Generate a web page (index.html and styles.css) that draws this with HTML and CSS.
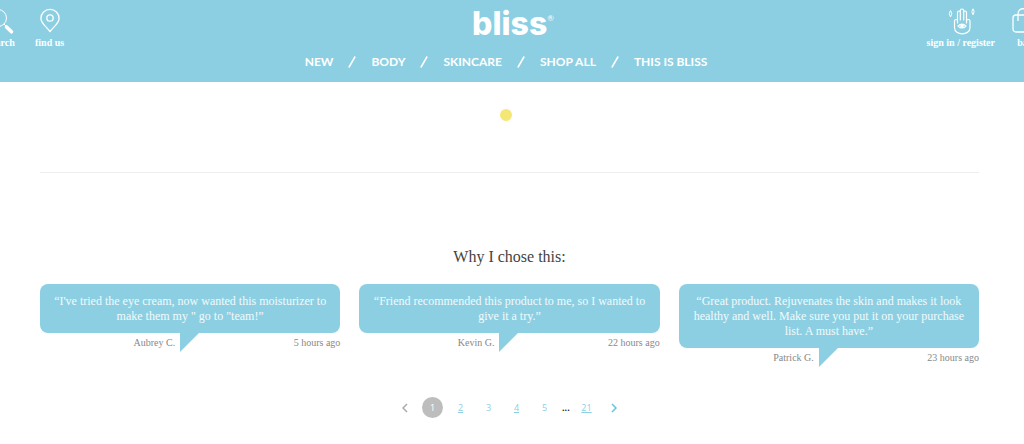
FILE: index.html
```html
<!DOCTYPE html>
<html lang="en">
<head>
<meta charset="utf-8">
<title>bliss</title>
<meta name="viewport" content="width=device-width, initial-scale=1">
<link rel="stylesheet" href="styles.css">
</head>
<body>
<header class="header">
  <div class="tools tools-left">
    <a class="tool" href="#search">
      <svg class="icon" viewBox="0 0 28 28" fill="none" stroke="currentColor"><circle cx="11" cy="11" r="8.500"/><path d="M17 17l2 2"/><path d="M19.500 20l5 4.800" stroke-width="3.600" stroke-linecap="round"/></svg>
      <span>search</span>
    </a>
    <a class="tool" href="#find">
      <svg class="icon" viewBox="0 0 28 28" fill="none" stroke="currentColor" stroke-width="1.300"><path d="M14 24.500C10.500 20 4.900 16 4.900 11.400a9.100 9.100 0 0 1 18.200 0C23.100 16 17.500 20 14 24.500z"/><circle cx="14" cy="11" r="3.200"/></svg>
      <span>find us</span>
    </a>
  </div>
  <div class="brand">
    <a class="logo" href="#home">bliss<sup class="mark">®</sup></a>
    <nav class="nav">
      <a href="#new">NEW</a><svg class="slash" viewBox="0 0 8 12"><path d="M.8 11.500L7.200 .5"/></svg>
      <a href="#body">BODY</a><svg class="slash" viewBox="0 0 8 12"><path d="M.8 11.500L7.200 .5"/></svg>
      <a href="#skincare">SKINCARE</a><svg class="slash" viewBox="0 0 8 12"><path d="M.8 11.500L7.200 .5"/></svg>
      <a href="#shop">SHOP ALL</a><svg class="slash" viewBox="0 0 8 12"><path d="M.8 11.500L7.200 .5"/></svg>
      <a href="#about">THIS IS BLISS</a>
    </nav>
  </div>
  <div class="tools tools-right">
    <a class="tool" href="#account">
      <svg class="icon" viewBox="0 0 28 28" fill="none" stroke="currentColor" stroke-width="1.200" stroke-linejoin="round"><path d="M7.500 14c0-2 3-2 3 0v2V5.500c0-2 2.800-2 2.800 0V13 3.500c0-2 3.400-2 3.400 0V13 5.500c0-2 2.800-2 2.800 0V16v-2c0-2 3.500-2 3.500 0v6.500c0 8.600-15.500 8.600-15.500 0z"/><path d="M11 19q4-4 8 0q-4 4-8 0z"/><circle cx="15" cy="19" r="1.200" fill="currentColor"/><path d="M3.500 3.500l1.300 3.200-1.300 3.200-1.300-3.200zM26 1.800l1.200 3-1.200 3-1.200-3z" stroke-width="1"/></svg>
      <span>sign in / register</span>
    </a>
    <a class="tool" href="#bag">
      <svg class="icon" viewBox="0 0 28 28" fill="none" stroke="currentColor" stroke-width="1.300"><rect x="2" y="8" width="20" height="17" rx="3"/><path d="M7 14V7c0-7 10-7 10 0v7"/></svg>
      <span>bag</span>
    </a>
  </div>
</header>
<main class="page">
  <div class="loader"><span class="dot"></span></div>
  <hr class="rule">
  <h2 class="title">Why I chose this:</h2>
  <section class="reviews">
    <article class="review">
      <p class="quote">“I've tried the eye cream, now wanted this moisturizer to make them my " go to "team!”</p>
      <footer class="meta"><span class="name">Aubrey C.</span><svg class="tail" viewBox="0 0 19 19"><path d="M0 0h19L0 19z"/></svg><time class="time">5 hours ago</time></footer>
    </article>
    <article class="review">
      <p class="quote">“Friend recommended this product to me, so I wanted to give it a try.”</p>
      <footer class="meta"><span class="name">Kevin G.</span><svg class="tail" viewBox="0 0 19 19"><path d="M0 0h19L0 19z"/></svg><time class="time">22 hours ago</time></footer>
    </article>
    <article class="review">
      <p class="quote">“Great product. Rejuvenates the skin and makes it look healthy and well. Make sure you put it on your purchase list. A must have.”</p>
      <footer class="meta"><span class="name">Patrick G.</span><svg class="tail" viewBox="0 0 19 19"><path d="M0 0h19L0 19z"/></svg><time class="time">23 hours ago</time></footer>
    </article>
  </section>
  <nav class="pager" aria-label="Pages">
    <button class="arrow" type="button" aria-label="Previous" disabled><svg viewBox="0 0 6 10"><path d="M5 1L1 5l4 4"/></svg></button>
    <a class="num current" href="#1" aria-current="page">1</a>
    <a class="num line" href="#2">2</a>
    <a class="num" href="#3">3</a>
    <a class="num line" href="#4">4</a>
    <a class="num" href="#5">5</a>
    <span class="dots">...</span>
    <a class="num line" href="#21">21</a>
    <button class="arrow next" type="button" aria-label="Next"><svg viewBox="0 0 6 10"><path d="M1 1l4 4-4 4"/></svg></button>
  </nav>
</main>
</body>
</html>
```
FILE: styles.css
```css
* { box-sizing: border-box; }
body {
  margin: 0;
  overflow-x: hidden;
  background: #fff;
  color: #444;
  font-family: "Liberation Serif", serif;
}
a { color: inherit; text-decoration: none; }

.header {
  display: flex;
  justify-content: space-between;
  overflow: hidden;
  padding-bottom: 12px;
  background: #8dcfe2;
  color: #fff;
}
.tools {
  display: flex;
  flex: 1 0 0;
  gap: 20px;
  padding-top: 7px;
}
.tools-left { margin-left: -13px; }
.tools-right { justify-content: flex-end; gap: 16px; margin-right: -15px; }
.tool {
  display: flex;
  flex-direction: column;
  align-items: center;
  gap: 1px;
  font: bold 10px/14px "Liberation Serif", serif;
  white-space: nowrap;
}
.icon { width: 28px; height: 28px; }
.brand { display: flex; flex-direction: column; align-items: center; }
.logo {
  padding-top: 4px;
  font: 800 32px/40px Inter, sans-serif;
}
.mark { font: 8px/8px Lato, sans-serif; vertical-align: 14px; }
.nav {
  display: flex;
  align-items: center;
  gap: 15px;
  padding: 9px 14px 0 0;
  font: 700 12px/17px Lato, sans-serif;
  white-space: nowrap;
}
.slash { width: 8px; height: 12px; fill: none; stroke: currentColor; stroke-width: 1.5; }

.page { padding: 27px 45px 24px 40px; }
.loader { display: flex; justify-content: center; padding-right: 7px; }
.dot { width: 12px; height: 12px; border-radius: 50%; background: #f4e776; }
.rule { margin: 51px 0 0; border: 0; border-top: 1px solid #eee; }
.title {
  margin: 72px 0 15px;
  font: 16px/24px "Liberation Serif", serif;
  text-align: center;
}
.reviews {
  display: grid;
  grid-template-columns: repeat(3, 1fr);
  align-items: start;
  gap: 19px;
}
.quote {
  margin: 0;
  padding: 10px 11px 9px;
  border-radius: 8px;
  background: #8dcfe2;
  color: #f1fafc;
  font-size: 12px;
  line-height: 15px;
  text-align: center;
}
.meta {
  display: grid;
  grid-template-columns: 45% 19px 1fr;
  column-gap: 5px;
  color: #888;
  font-size: 10px;
  line-height: 19px;
}
.name, .time { text-align: right; }
.tail { width: 19px; height: 19px; fill: #8dcfe2; }

.pager {
  display: flex;
  justify-content: center;
  align-items: center;
  gap: 7px;
  padding-top: 30px;
  font: 9px/21px "Open Sans", sans-serif;
}
.num { width: 21px; color: #8dcfe2; text-align: center; }
.line { text-decoration: underline; }
.current { border-radius: 50%; background: #bdbdbd; color: #fff; }
.dots { width: 7px; color: #222; font-weight: bold; text-align: center; }
.arrow {
  display: flex;
  justify-content: center;
  width: 20px;
  padding: 0;
  border: 0;
  background: none;
  color: #aaa;
}
.next { color: #63c2dd; }
.arrow svg { width: 6px; height: 10px; fill: none; stroke: currentColor; stroke-width: 1.5; }
```
